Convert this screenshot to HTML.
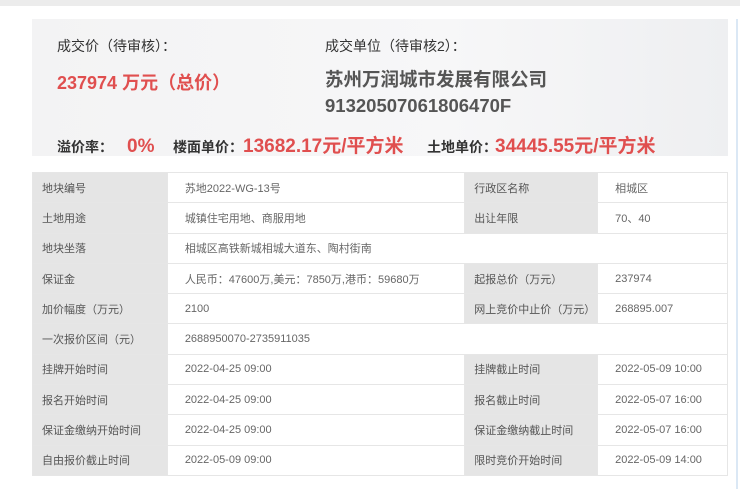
<!DOCTYPE html>
<html><head><meta charset="utf-8"><style>
*{margin:0;padding:0;box-sizing:border-box}
body{width:740px;height:489px;background:#fff;font-family:"Liberation Sans","Noto Sans CJK SC",sans-serif;position:relative;overflow:hidden;color:#333}
.top{position:absolute;left:0;top:0;width:740px;height:6px;background:#ececec}
.rl{position:absolute;left:736px;top:19px;width:2px;height:470px;background:#dbe8f5}
.panel{position:absolute;left:32px;top:19px;width:696px;height:137px;background:linear-gradient(90deg,#f3f3f4,#f7f7f8 60%,#eeeff1)}
.t{position:absolute;white-space:nowrap}
.red{color:#e04f4f;font-weight:bold}
.row{position:absolute;left:57px;top:131px;display:flex;align-items:baseline;white-space:nowrap}
.row span{display:block}
.row .lb{font-size:14px;font-weight:bold;color:#333}
.row .red{font-size:19px}
table{position:absolute;left:32px;top:172px;width:696px;border-collapse:collapse;font-size:11px}
td{height:30.3px;border:1px solid #e6e6e6;padding-left:17px;color:#666}
td.l{background:#e5e5e5;color:#555;padding-left:9px}
</style></head><body>
<div class="top"></div><div class="rl"></div>
<div class="panel"></div>
<div class="t" style="left:57px;top:36px;font-size:14px;color:#333">成交价（待审核）：</div>
<div class="t" style="left:325px;top:36px;font-size:14px;color:#333">成交单位（待审核2）：</div>
<div class="t red" style="left:57px;top:69px;font-size:18px">237974 万元（总价）</div>
<div class="t" style="left:325px;top:67px;font-size:18.5px;font-weight:bold;color:#555;line-height:26px">苏州万润城市发展有限公司<br>91320507061806470F</div>
<div class="row">
<span class="lb" style="width:70px">溢价率：</span>
<span class="red" style="width:46px">0%</span>
<span class="lb" style="width:70px">楼面单价：</span>
<span class="red" style="width:184px">13682.17元/平方米</span>
<span class="lb" style="width:68px">土地单价：</span>
<span class="red">34445.55元/平方米</span>
</div>
<table>
<colgroup><col style="width:135px"><col style="width:298px"><col style="width:133px"><col style="width:130px"></colgroup>
<tr><td class="l">地块编号</td><td>苏地2022-WG-13号</td><td class="l">行政区名称</td><td>相城区</td></tr>
<tr><td class="l">土地用途</td><td>城镇住宅用地、商服用地</td><td class="l">出让年限</td><td>70、40</td></tr>
<tr><td class="l">地块坐落</td><td colspan="3">相城区高铁新城相城大道东、陶村街南</td></tr>
<tr><td class="l">保证金</td><td>人民币：47600万,美元：7850万,港币：59680万</td><td class="l">起报总价（万元）</td><td>237974</td></tr>
<tr><td class="l">加价幅度（万元）</td><td>2100</td><td class="l">网上竞价中止价（万元）</td><td>268895.007</td></tr>
<tr><td class="l">一次报价区间（元）</td><td colspan="3">2688950070-2735911035</td></tr>
<tr><td class="l">挂牌开始时间</td><td>2022-04-25 09:00</td><td class="l">挂牌截止时间</td><td>2022-05-09 10:00</td></tr>
<tr><td class="l">报名开始时间</td><td>2022-04-25 09:00</td><td class="l">报名截止时间</td><td>2022-05-07 16:00</td></tr>
<tr><td class="l">保证金缴纳开始时间</td><td>2022-04-25 09:00</td><td class="l">保证金缴纳截止时间</td><td>2022-05-07 16:00</td></tr>
<tr><td class="l">自由报价截止时间</td><td>2022-05-09 09:00</td><td class="l">限时竞价开始时间</td><td>2022-05-09 14:00</td></tr>
</table>
</body></html>
